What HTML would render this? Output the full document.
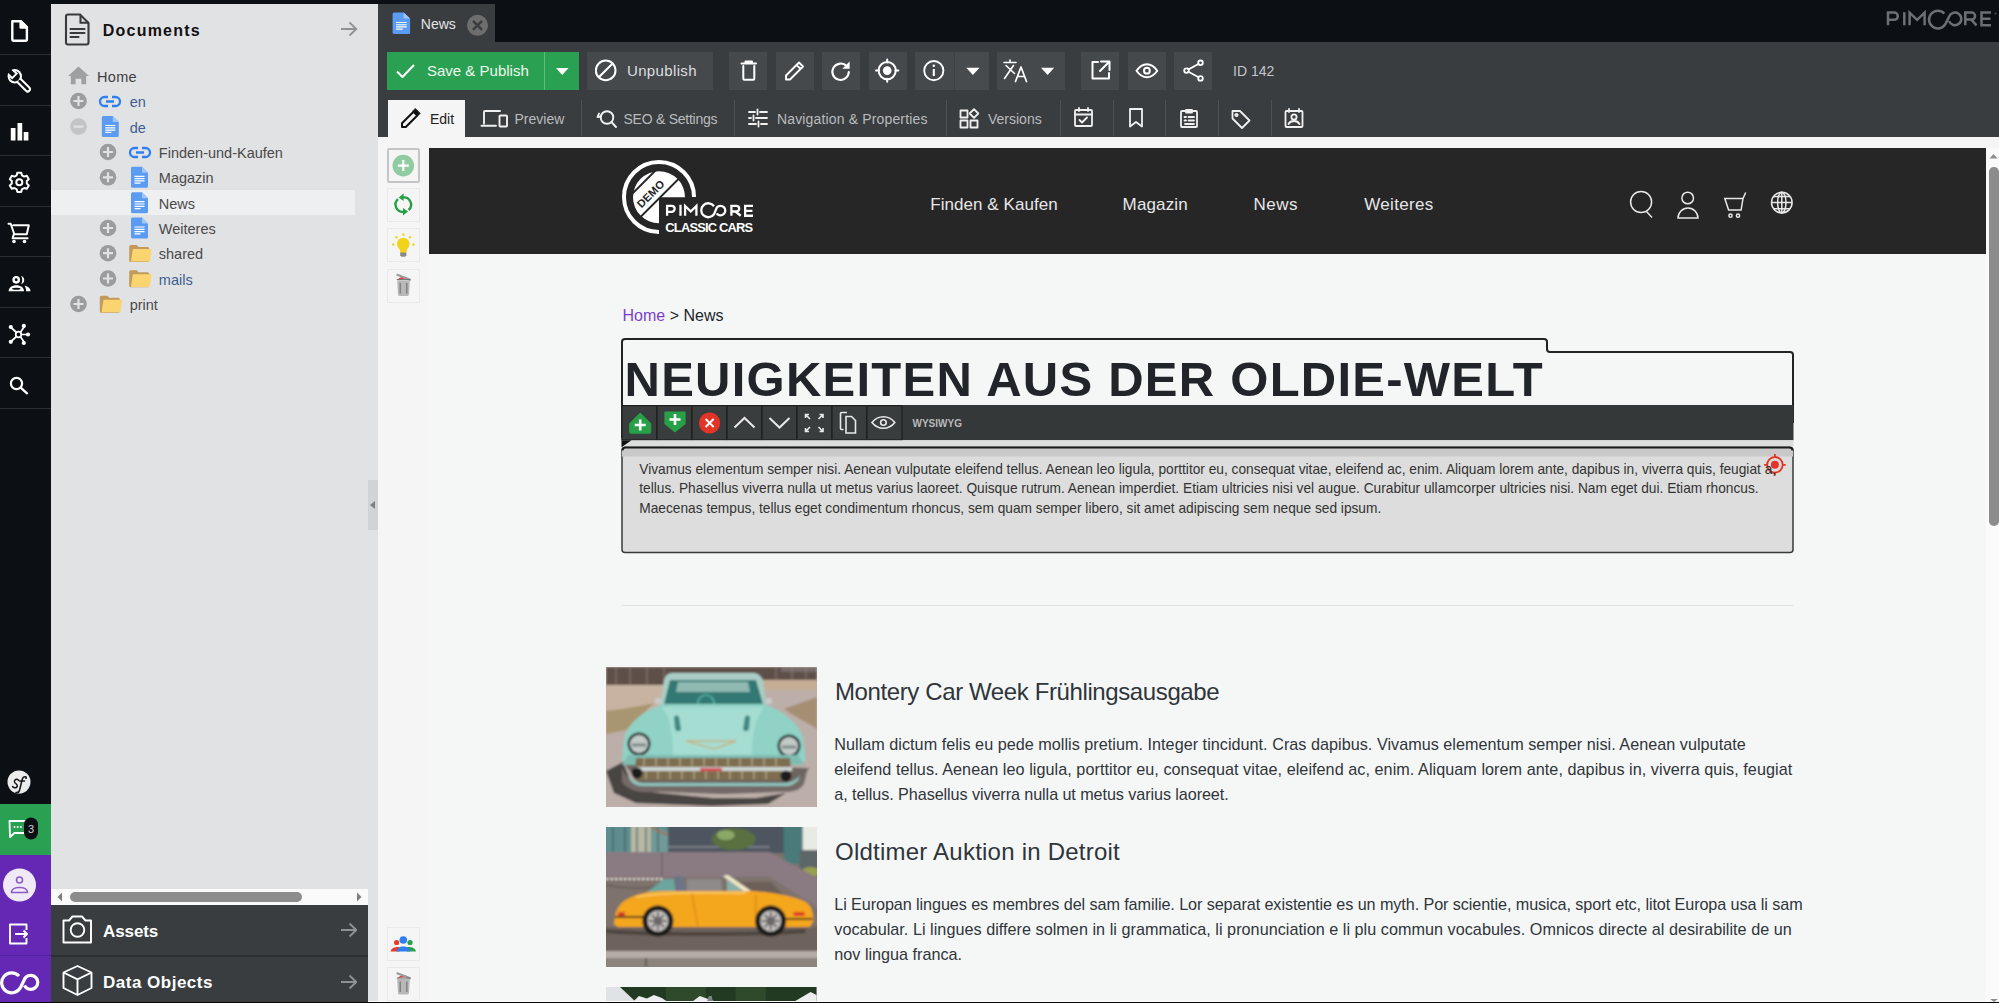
<!DOCTYPE html>
<html><head><meta charset="utf-8">
<style>
*{box-sizing:border-box;margin:0;padding:0}
html,body{width:1999px;height:1003px;overflow:hidden;background:#0c1014;font-family:"Liberation Sans",sans-serif}
.a{position:absolute}
#sb{left:0;top:0;width:51px;height:1003px;background:#0c1014}
.sep{position:absolute;left:0;width:51px;height:1px;background:#2b2f33}
#tree{left:51px;top:4px;width:327px;height:999px;background:#e1e2e4}
#main{left:378px;top:4px;width:1621px;height:999px;background:#f5f5f5}
#tabbar{left:378px;top:0;width:1621px;height:42px;background:#0c1014}
#tb{left:378px;top:42px;width:1621px;height:95px;background:#393d40}
.btn{position:absolute;top:52px;height:38px;background:#45494c}
.tt{position:absolute;top:100px;height:37px;color:#b8babb;font-size:14px}
.tdiv{position:absolute;top:100px;width:1px;height:36px;background:#4d5154}
.tl{font-size:14.5px;line-height:16px;white-space:nowrap}
.nav{top:194.5px;font-size:17px;color:#e6e6e6;white-space:nowrap;line-height:20px}
.tit{left:835px;font-size:24px;color:#2f353a;white-space:nowrap;line-height:28px}
.par{left:834.3px;font-size:16.2px;line-height:25px;color:#30353a;white-space:nowrap}
#ifr{left:428px;top:147px;width:1571px;height:856px;background:#f5f7f7}
</style></head><body>
<!-- sidebar -->
<div id="sb" class="a">
  <div class="sep" style="top:54px"></div>
  <div class="sep" style="top:105px"></div>
  <div class="sep" style="top:155px"></div>
  <div class="sep" style="top:206px"></div>
  <div class="sep" style="top:256px"></div>
  <div class="sep" style="top:307px"></div>
  <div class="sep" style="top:357px"></div>
  <div class="sep" style="top:408px"></div>
  <div class="a" style="left:0;top:804px;width:51px;height:51px;background:#2aa152"></div>
  <div class="a" style="left:0;top:855px;width:51px;height:148px;background:#6428b4"></div>
  <div class="sep" style="top:955px;background:#5220a0"></div>

  <svg class="a" style="left:0;top:0" width="51" height="420" viewBox="0 0 51 420" fill="none" stroke="#fff" stroke-width="2.4" stroke-linejoin="round" stroke-linecap="round">
    <!-- doc -->
    <path d="M12.3 21.2h8.6l6 6v12.6a0.9 0.9 0 0 1-0.9 0.9H13.2a0.9 0.9 0 0 1-0.9-0.9z"/>
    <path d="M20.6 21.2v6.3h6.3z" fill="#fff"/>
    <!-- wrench -->
    <g transform="translate(14.8 76.3) rotate(45)" stroke="none">
      <circle r="7.2" fill="#fff"/>
      <rect x="0" y="-3.3" width="21.5" height="6.6" rx="3.3" fill="#fff"/>
      <circle r="5.1" fill="#0c1014"/>
      <rect x="5.5" y="-1.3" width="14" height="2.6" rx="1.3" fill="#0c1014"/>
      <rect x="-5.2" y="-4.2" width="5.6" height="8.4" fill="#fff"/>
      <rect x="-10" y="-2.2" width="8.5" height="4.4" fill="#0c1014"/>
    </g>
    <!-- bars -->
    <path d="M10.8 128h4.7v12.6h-4.7zM17.5 123h4.7v17.6h-4.7zM23.7 132h4.7v8.6h-4.7z" fill="#fff" stroke="none"/>
    <!-- gear -->
    <g transform="translate(19.3 182.2)">
      <path d="M-2 -9.5h4l0.6 2.6 2.3 1.3 2.6-0.8 2 3.4-2 1.8v2.6l2 1.8-2 3.4-2.6-0.8-2.3 1.3-0.6 2.6h-4l-0.6-2.6-2.3-1.3-2.6 0.8-2-3.4 2-1.8v-2.6l-2-1.8 2-3.4 2.6 0.8 2.3-1.3z" stroke-width="2"/>
      <circle r="3" stroke-width="2"/>
    </g>
    <!-- cart -->
    <path d="M8.5 223.8h2.2l3.6 10.5h12.5l2-9h-15.5M13.8 234.3l-1.2 4h15" stroke-width="2"/>
    <circle cx="14" cy="241.5" r="1.8" fill="#fff" stroke="none"/>
    <circle cx="24.5" cy="241.5" r="1.8" fill="#fff" stroke="none"/>
    <!-- users -->
    <circle cx="16.2" cy="279.8" r="2.65" stroke-width="2.4"/>
    <path d="M21.2 275.9a4.3 4.3 0 0 1 0 8.2a9 9 0 0 0 0-8.2z" fill="#fff" stroke="none"/>
    <path d="M8.6 291.2c0-3.7 3.5-6 7.7-6s7.7 2.3 7.7 6z" fill="#fff" stroke="none"/>
    <ellipse cx="16.3" cy="288.7" rx="4.2" ry="0.95" fill="#0c1014" stroke="none"/>
    <path d="M24.6 285.8c3.5 0.5 5.9 2.6 5.9 5.4h-4.4c0-2.1-0.5-3.8-1.5-5.4z" fill="#fff" stroke="none"/>
    <!-- network -->
    <g stroke-width="1.7">
      <circle cx="18.5" cy="334.5" r="2.8"/>
      <path d="M16.5 332.5L11 327.5M20.5 332.3L24 327M21.3 334.5H28M20.5 336.7L24 342M16.5 336.5L11 341.5"/>
    </g>
    <g fill="#fff" stroke="none">
      <circle cx="10.8" cy="327" r="2.1"/><circle cx="23.8" cy="325.9" r="2.1"/><circle cx="28" cy="334.5" r="2.1"/><circle cx="23.8" cy="343" r="2.1"/><circle cx="10.8" cy="341.8" r="2.1"/>
    </g>
    <!-- search -->
    <circle cx="16.5" cy="383.5" r="5.6" stroke-width="2.2"/>
    <path d="M20.7 387.7l6.3 5.6" stroke-width="2.4"/>
  </svg>
  <!-- symfony -->
  <svg class="a" style="left:0;top:760px" width="51" height="243" viewBox="0 760 51 243">
    <circle cx="19" cy="782" r="11.5" fill="#ececec"/>
    <path d="M12.5 786.5c1 1.5 3 1.8 4.2 0.6 1.3-1.3 0.3-2.6-1-3.6-1.3-1-1.8-2.3-0.7-3.5 1.2-1.2 3-0.8 3.6 0.3" fill="none" stroke="#141414" stroke-width="1.5" stroke-linecap="round"/>
    <path d="M16 792.5c1.8 0.5 3-0.5 3.6-2.5l2.6-10.5c0.6-2.2 2-3.2 3.8-2.6M19.5 781h5" fill="none" stroke="#141414" stroke-width="1.5" stroke-linecap="round"/>
    <circle cx="26" cy="778" r="1" fill="#141414"/>
    <!-- chat -->
    <path d="M9.5 821h16v12h-11l-4.5 4z" fill="none" stroke="#fff" stroke-width="1.8" stroke-linejoin="round"/>
    <circle cx="14.5" cy="827" r="1" fill="#fff"/><circle cx="17.7" cy="827" r="1" fill="#fff"/><circle cx="20.9" cy="827" r="1" fill="#fff"/>
    <rect x="24" y="817.5" width="14" height="22" rx="7" fill="#0c1014"/>
    <text x="31" y="833" font-size="11" fill="#d0d0d0" text-anchor="middle" font-family="Liberation Sans">3</text>
    <!-- avatar -->
    <circle cx="19.5" cy="885" r="16.5" fill="#f0eaf8"/>
    <circle cx="19.5" cy="880" r="3" fill="none" stroke="#8a5cc8" stroke-width="1.6"/>
    <path d="M11.5 892.5c0-3.3 3.8-5 8-5s8 1.7 8 5z" fill="none" stroke="#8a5cc8" stroke-width="1.7" stroke-linejoin="round"/>
    <!-- logout -->
    <path d="M26.5 930v-5.5h-16.5v19h16.5v-5.5M15 934h12M23.5 930.5l3.5 3.5-3.5 3.5" fill="none" stroke="#fff" stroke-width="1.9" stroke-linejoin="round"/>
    <!-- infinity -->
    <path d="M19 976a10 10 0 1 0 1.5 11.5l3.5-7a7 7 0 1 1 0.5 5" fill="none" stroke="#fff" stroke-width="3.2"/>
  </svg>
</div>
<!-- tree -->
<div id="tree" class="a">
  <svg class="a" style="left:0;top:0" width="327" height="330" viewBox="51 4 327 330">
    <defs>
      <g id="plus"><circle r="8.3" fill="#9b9c9e"/><path d="M-5 0h10M0-5v10" stroke="#e1e2e4" stroke-width="2.2"/></g>
      <g id="doc"><path d="M0 1.5a1.5 1.5 0 0 1 1.5-1.5h9.5l6 6v13.5a1.5 1.5 0 0 1-1.5 1.5h-14a1.5 1.5 0 0 1-1.5-1.5z" fill="#5b9cf2"/><path d="M11 0l6 6h-6z" fill="#a0c6f8"/><path d="M3.5 9.5h10M3.5 11.8h10M3.5 14.1h10M3.5 16.4h6" stroke="#fff" stroke-width="1.2"/></g>
      <g id="fold"><path d="M0 2a1.5 1.5 0 0 1 1.5-1.5h6l2 2h9a1.5 1.5 0 0 1 1.5 1.5v12a1.5 1.5 0 0 1-1.5 1.5h-17a1.5 1.5 0 0 1-1.5-1.5z" fill="#c39a5d"/><path d="M3.7 4.5h17.5a1 1 0 0 1 1 1.1l-1.5 10.4a1.5 1.5 0 0 1-1.5 1.1h-17.5z" fill="#f9d46f"/></g>
      <g id="link"><path d="M8.5 0.5h-3.5a4.5 4.5 0 0 0 0 9h3.5M12.5 0.5h3.5a4.5 4.5 0 0 1 0 9h-3.5M6.5 5h8" fill="none" stroke="#2f7ff0" stroke-width="2.3"/></g>
    </defs>
    <!-- header doc icon -->
    <path d="M66 16.5a2 2 0 0 1 2-2h12l8.5 8.5v19.5a2 2 0 0 1-2 2h-18.5a2 2 0 0 1-2-2z" fill="none" stroke="#3a3a3a" stroke-width="2.1"/>
    <path d="M80.5 14.8v8h8" fill="none" stroke="#3a3a3a" stroke-width="2.1"/>
    <path d="M70.5 29h14M70.5 33h14M70.5 37h8" stroke="#3a3a3a" stroke-width="2.1" stroke-linecap="round"/>
    <path d="M341 29h15M349.5 22.5l6.8 6.5-6.8 6.5" fill="none" stroke="#8f9193" stroke-width="1.8"/>
    <!-- selected row -->
    <rect x="51" y="190" width="304" height="25" fill="#eeeff0"/>
    <!-- home -->
    <path d="M78.5 66.5l10.5 9.5h-2.8v8.3h-4.8v-5.5h-5.8v5.5h-4.8v-8.3h-2.8z" fill="#9fa0a2"/>
    <use href="#plus" x="78.5" y="101"/>
    <use href="#link" x="99.5" y="96.5"/>
    <circle cx="78.5" cy="126.6" r="8.3" fill="#c3c4c6"/><path d="M73.5 126.6h10" stroke="#e1e2e4" stroke-width="2.2"/>
    <use href="#doc" x="101.8" y="116"/>
    <use href="#plus" x="108" y="152"/>
    <use href="#link" x="129.5" y="147.5"/>
    <use href="#plus" x="108" y="177.3"/>
    <use href="#doc" x="131" y="166.8"/>
    <use href="#doc" x="131" y="192.2"/>
    <use href="#plus" x="108" y="228"/>
    <use href="#doc" x="131" y="217.5"/>
    <use href="#plus" x="108" y="253.2"/>
    <use href="#fold" x="129.2" y="244.5"/>
    <use href="#plus" x="108" y="278.5"/>
    <use href="#fold" x="129.2" y="269.8"/>
    <use href="#plus" x="78.5" y="304"/>
    <use href="#fold" x="99.8" y="295.2"/>
  </svg>
  <div class="a" style="left:51.7px;top:17.7px;font-size:16px;font-weight:bold;letter-spacing:1.24px;color:#111">Documents</div>
  <div class="a tl" style="left:46px;top:65px;color:#404040;letter-spacing:0.3px">Home</div>
  <div class="a tl" style="left:78.7px;top:90px;color:#3e5f90">en</div>
  <div class="a tl" style="left:78.7px;top:115.5px;color:#3e5f90">de</div>
  <div class="a tl" style="left:107.8px;top:141px;color:#4a4a4a">Finden-und-Kaufen</div>
  <div class="a tl" style="left:107.8px;top:166.3px;color:#4a4a4a">Magazin</div>
  <div class="a tl" style="left:107.8px;top:191.6px;color:#4a4a4a">News</div>
  <div class="a tl" style="left:107.8px;top:217px;color:#4a4a4a">Weiteres</div>
  <div class="a tl" style="left:107.8px;top:242.2px;color:#4a4a4a">shared</div>
  <div class="a tl" style="left:107.8px;top:267.5px;color:#3e5f90">mails</div>
  <div class="a tl" style="left:78.7px;top:293px;color:#4a4a4a">print</div>
  <!-- collapse handle -->
  <div class="a" style="left:317px;top:476px;width:10px;height:50px;background:#d2d3d5"></div>
  <svg class="a" style="left:318px;top:496px" width="8" height="10"><path d="M6 1v8L1 5z" fill="#7d7f81"/></svg>
  <!-- h scrollbar -->
  <div class="a" style="left:0;top:885px;width:317px;height:16px;background:#fafafa"></div>
  <svg class="a" style="left:0;top:885px" width="317" height="16"><path d="M11 3.5v9l-4.5-4.5z" fill="#7f7f7f"/><path d="M306 3.5v9l4.5-4.5z" fill="#7f7f7f"/></svg>
  <div class="a" style="left:19px;top:888px;width:232px;height:10px;border-radius:5px;background:#8c8c8c"></div>
  <!-- assets / data objects -->
  <div class="a" style="left:0;top:901px;width:317px;height:98px;background:#393d40"></div>
  <div class="a" style="left:0;top:951px;width:317px;height:1.5px;background:#2c3033"></div>
  <svg class="a" style="left:0;top:901px" width="317" height="98" viewBox="51 905 317 98" fill="none" stroke="#fff" stroke-width="1.9" stroke-linejoin="round">
    <path d="M63.5 920.5h5.5l3.5-4h9.5l3.5 4h5.5v22h-27.5z"/>
    <circle cx="77.5" cy="930" r="6.8"/>
    <path d="M63.5 972.5l14-6.5 14 6.5v15.5l-14 7-14-7zM63.5 972.5l14 6.8 14-6.8M77.5 979.3v15.5"/>
    <path d="M341 930h15M349.5 923.5l6.8 6.5-6.8 6.5M341 982h15M349.5 975.5l6.8 6.5-6.8 6.5" stroke="#8f9193" stroke-width="1.8"/>
  </svg>
  <div class="a" style="left:52px;top:917.5px;font-size:17px;font-weight:bold;color:#fff;letter-spacing:-0.1px">Assets</div>
  <div class="a" style="left:52px;top:969px;font-size:17px;font-weight:bold;color:#fff;letter-spacing:0.5px">Data Objects</div>
</div>
<!-- main -->
<div id="tabbar" class="a"></div>
<div class="a" style="left:378px;top:4px;width:117px;height:38px;background:#393d40"></div>
<svg class="a" style="left:378px;top:0" width="1621" height="42" viewBox="378 0 1621 42">
  <g transform="translate(392.6 12.5)"><path d="M0 1.5a1.5 1.5 0 0 1 1.5-1.5h9.5l6.5 6v14a1.5 1.5 0 0 1-1.5 1.5h-14.5a1.5 1.5 0 0 1-1.5-1.5z" fill="#5b9cf2"/><path d="M11 0l6.5 6h-6.5z" fill="#a0c6f8"/><path d="M3.5 10h10.5M3.5 12.2h10.5M3.5 14.4h10.5M3.5 16.6h6.5" stroke="#fff" stroke-width="1.1"/></g>
  <circle cx="477.5" cy="25.3" r="10.5" fill="#6e6e6e"/>
  <path d="M473 20.8l9 9M482 20.8l-9 9" stroke="#393d40" stroke-width="2.6"/>
  <!-- PIMCORE logo -->
  <g fill="none" stroke="#6d7073" stroke-width="2.5">
    <path d="M1888 25.3V12.6h6.2a3.6 3.6 0 0 1 0 7.2h-6.2"/>
    <path d="M1904.3 12.2v13.1"/>
    <path d="M1909.6 25.3V12.6l7.5 7.2 7.5-7.2v12.7"/>
    <path d="M1944.3 13.6a8.8 8.8 0 1 0 1.2 10.3l3.5-7a6.3 6.3 0 1 1 0.1 4.2"/>
    <path d="M1965.3 25.3V12.6h6.3a3.5 3.5 0 0 1 0 7h-6.3M1971.5 19.8l5 5.5"/>
    <path d="M1991 12.6h-9.5v12.7h9.5M1981.5 18.8h9"/>
  </g>
  <circle cx="1995.5" cy="13.5" r="1" fill="#4a4d50"/>
</svg>
<div class="a" style="left:420.8px;top:16px;font-size:14px;color:#e4e4e4">News</div>
<div id="tb" class="a"></div>
<div class="a" style="left:386.5px;top:52px;width:192.5px;height:38px;background:#2aa152"></div>
<div class="a" style="left:544px;top:52px;width:1px;height:38px;background:#5cbd7d"></div>
<div class="btn" style="left:587px;width:125.5px"></div>
<div class="btn" style="left:729px;width:38px"></div>
<div class="btn" style="left:775.5px;width:38px"></div>
<div class="btn" style="left:822px;width:38px"></div>
<div class="btn" style="left:869px;width:38px"></div>
<div class="btn" style="left:915px;width:39px"></div>
<div class="btn" style="left:954px;width:35px;background:#474b4e"></div>
<div class="a" style="left:953.5px;top:52px;width:1px;height:38px;background:#3d4144"></div>
<div class="btn" style="left:997px;width:68px"></div>
<div class="btn" style="left:1081px;width:38px"></div>
<div class="btn" style="left:1127.5px;width:38px"></div>
<div class="btn" style="left:1174px;width:38px"></div>
<div class="a" style="left:427px;top:62px;font-size:15px;color:#eef7ef">Save &amp; Publish</div>
<div class="a" style="left:627px;top:62px;font-size:15px;color:#dcdedf;letter-spacing:0.35px">Unpublish</div>
<div class="a" style="left:1233px;top:63px;font-size:14px;color:#c4c6c8">ID 142</div>
<!-- tab strip -->
<div class="a" style="left:387.5px;top:100px;width:77.3px;height:37px;background:#f5f5f5"></div>
<div class="tdiv" style="left:581px"></div>
<div class="tdiv" style="left:734px"></div>
<div class="tdiv" style="left:946px"></div>
<div class="tdiv" style="left:1059.5px"></div>
<div class="tdiv" style="left:1112.5px"></div>
<div class="tdiv" style="left:1165px"></div>
<div class="tdiv" style="left:1217.5px"></div>
<div class="tdiv" style="left:1270.5px"></div>
<div class="a" style="left:430px;top:111px;font-size:14px;color:#222">Edit</div>
<div class="a" style="left:514.5px;top:111px;font-size:14px;color:#b9bbbd">Preview</div>
<div class="a" style="left:623.5px;top:111px;font-size:14px;color:#b9bbbd;letter-spacing:-0.25px">SEO &amp; Settings</div>
<div class="a" style="left:777px;top:111px;font-size:14px;color:#b9bbbd;letter-spacing:0.15px">Navigation &amp; Properties</div>
<div class="a" style="left:988px;top:111px;font-size:14px;color:#b9bbbd">Versions</div>
<svg class="a" style="left:378px;top:42px" width="1000" height="95" viewBox="378 42 1000 95" fill="none" stroke="#fff" stroke-width="2" stroke-linejoin="round" stroke-linecap="round">
  <path d="M397 71.5l5.5 5.5 11.5-12" stroke-width="2.1" stroke-linecap="butt"/>
  <path d="M556 68h12.5l-6.25 7z" fill="#fff" stroke="none"/>
  <circle cx="605.7" cy="70.4" r="9.8" stroke-width="2"/>
  <path d="M598.8 77.3l13.8-13.8"/>
  <!-- trash -->
  <path d="M741.5 63.5h14.5M745.5 63.2v-1.6h6.5v1.6M743.3 66v12.7a1 1 0 0 0 1 1h9a1 1 0 0 0 1-1V66" stroke-width="2"/>
  <!-- pencil -->
  <path d="M786 79.5v-4l13-13 4 4-13 13zM796.5 64.8l4 4" stroke-width="1.9"/>
  <!-- refresh -->
  <path d="M846.8 66.4a8.2 8.2 0 1 0 2 5.6" stroke-width="2.1"/>
  <path d="M849.6 61.5v7.3h-7.3z" fill="#fff" stroke="none"/>
  <!-- target -->
  <circle cx="887.2" cy="70.6" r="8.6" stroke-width="2"/>
  <circle cx="887.2" cy="70.6" r="4.3" fill="#fff" stroke="none"/>
  <path d="M887.2 59.5v3M887.2 78.7v3M876 70.6h3M895.3 70.6h3" stroke-width="2"/>
  <!-- info -->
  <circle cx="933.8" cy="70.6" r="9.6" stroke-width="1.9"/>
  <path d="M933.8 69v7" stroke-width="2.1" stroke-linecap="butt"/>
  <circle cx="933.8" cy="65.8" r="1.3" fill="#fff" stroke="none"/>
  <path d="M966.3 67.8h13.2l-6.6 7.2z" fill="#fff" stroke="none"/>
  <!-- translate -->
  <path d="M1004 62.5h12M1010 60v2.5M1006 65.5l8.5 8M1013.5 65.5l-9 13" stroke-width="1.6"/>
  <path d="M1015.5 81.5l5.5-14.5 5.5 14.5M1017.5 76.5h7" stroke-width="1.7"/>
  <path d="M1041 67.8h13.2l-6.6 7.2z" fill="#fff" stroke="none"/>
  <!-- open external -->
  <path d="M1098 62h-5.5v16.5h16.5v-5.5M1101 61.5h8.5v8.5M1109 62l-9 9" stroke-width="2"/>
  <!-- eye -->
  <path d="M1136.5 70.7c3-4.3 6.5-6.5 10.4-6.5s7.4 2.2 10.4 6.5c-3 4.3-6.5 6.5-10.4 6.5s-7.4-2.2-10.4-6.5z" stroke-width="2"/>
  <circle cx="1146.9" cy="70.7" r="2.9" stroke-width="2"/>
  <!-- share -->
  <circle cx="1200.5" cy="62.8" r="2.3" stroke-width="1.8"/>
  <circle cx="1186.5" cy="70.6" r="2.3" stroke-width="1.8"/>
  <circle cx="1200.5" cy="78.4" r="2.3" stroke-width="1.8"/>
  <path d="M1188.5 69.4l10-5.4M1188.5 71.8l10 5.4" stroke-width="1.8"/>
  <!-- tab icons -->
  <path d="M402 127v-3.8l11.5-11.5 3.8 3.8L405.8 127z" stroke="#111" stroke-width="2"/><path d="M415.5 108.8l4.6 4.6-2.4 2.4-4.6-4.6z" fill="#111" stroke="#111" stroke-width="1"/>
  <path d="M484 123.5v-11.5a1 1 0 0 1 1-1h15M481.5 125.8h14.5" stroke="#f0f0f0" stroke-width="1.9"/>
  <rect x="499.5" y="115.5" width="7.5" height="11" rx="0.8" stroke="#f0f0f0" stroke-width="1.9"/>
  <circle cx="607" cy="117.5" r="6.3" stroke="#f0f0f0" stroke-width="1.9"/>
  <path d="M611.5 122l4.5 5M599 113.5l-1.5 3.5 3.5-0.5" stroke="#f0f0f0" stroke-width="1.9"/>
  <g stroke="#f0f0f0" stroke-width="1.8">
    <path d="M749 112h6M760 112h7M749 118h2M756 118h11M749 124h7M761 124h6M757.5 109.5v5M753.5 115.5v5M758.5 121.5v5"/>
    <rect x="960.5" y="110.5" width="7" height="7"/><rect x="960.5" y="120.5" width="7" height="7"/><rect x="970.5" y="120.5" width="7" height="7"/>
    <path d="M974 109.2l4.3 4.3-4.3 4.3-4.3-4.3z"/>
    <rect x="1075" y="110" width="17" height="16" rx="1"/><path d="M1075 114.5h17M1079 108v3M1088 108v3M1079.5 120l2.5 2.5 5-5"/>
    <path d="M1130 109v17.5l6-4.5 6 4.5V109z"/>
    <rect x="1181" y="111" width="16" height="16" rx="1"/><path d="M1186 110h6v2.5h-6zM1184.5 117h1.5M1188.5 117h5.5M1184.5 120.5h1.5M1188.5 120.5h5.5M1185 124h9"/>
    <path d="M1232.5 111v7.5l9.5 9.5 7.5-7.5-9.5-9.5z"/><circle cx="1236.5" cy="115" r="1.2"/>
    <rect x="1285.5" y="111" width="17" height="16" rx="1"/><path d="M1289 109v3M1299 109v3"/><circle cx="1294" cy="117" r="2.6"/><path d="M1288.5 124c1-2 3-3 5.5-3s4.5 1 5.5 3"/>
  </g>
</svg>
<div id="main" class="a" style="top:137px;height:866px"></div>
<div id="ifr" class="a"></div>
<!-- left edit buttons -->
<div class="a" style="left:386.7px;top:148px;width:33.5px;height:35px;border:2px solid #c4c5c6;border-radius:2px"></div>
<div class="a" style="left:386.7px;top:188px;width:33.5px;height:34px;border:1px solid #e9e9e9"></div>
<div class="a" style="left:386.7px;top:228px;width:33.5px;height:34px;border:1px solid #e9e9e9"></div>
<div class="a" style="left:386.7px;top:268.5px;width:33.5px;height:34px;border:1px solid #e9e9e9"></div>
<div class="a" style="left:386.7px;top:927px;width:33.5px;height:34px;border:1px solid #e9e9e9"></div>
<div class="a" style="left:386.7px;top:967px;width:33.5px;height:34px;border:1px solid #e9e9e9"></div>
<svg class="a" style="left:378px;top:137px" width="50" height="866" viewBox="378 137 50 866">
  <circle cx="403.3" cy="165.6" r="10.8" fill="#90cba1"/>
  <path d="M397.8 165.6h11M403.3 160.1v11" stroke="#fff" stroke-width="2.2"/>
  <g transform="translate(806.6 0) scale(-1 1)"><g fill="none" stroke="#26a046" stroke-width="2.4">
    <path d="M398 210a7.2 7.2 0 0 1 6-12.5"/><path d="M408.6 199.2a7.2 7.2 0 0 1-6 12.5"/>
  </g>
  <path d="M403 193.5l5 4-5 3.5z" fill="#26a046"/><path d="M403.6 215.5l-5-4 5-3.5z" fill="#26a046"/></g>
  <circle cx="403.3" cy="244" r="6.3" fill="#f2d31b"/>
  <path d="M399.5 249h7.6l-1 4h-5.6z" fill="#f2d31b"/>
  <path d="M400.2 252.5h6.2v2.8l-1.2 1.5h-3.8l-1.2-1.5z" fill="#8a8a8a"/>
  <g fill="#f2d31b"><circle cx="403.3" cy="234.5" r="1.2"/><circle cx="396.5" cy="237.2" r="1.2"/><circle cx="410.1" cy="237.2" r="1.2"/><circle cx="393.2" cy="244.5" r="1.2"/><circle cx="413.4" cy="244.5" r="1.2"/></g>
  <g id="trash">
    <path d="M397.2 280.5h12.6l-0.8 14a1.6 1.6 0 0 1-1.6 1.5h-7.8a1.6 1.6 0 0 1-1.6-1.5z" fill="#b8b8b8"/>
    <path d="M400.2 283v10.5M406.8 283v10.5" stroke="#7a7a7a" stroke-width="1.3"/>
    <path d="M397.8 279.5c1.5-2 3.5-2.8 5.5-2.8s3.5 0.6 4.8 1.5" fill="#e63b2e"/>
    <path d="M396.6 274.5l14.2 5.5" stroke="#9a9a9a" stroke-width="2.2"/>
    <path d="M396.8 279.6h13.2" stroke="#6e6e6e" stroke-width="1"/>
  </g>
  <circle cx="403.3" cy="940" r="3.8" fill="#2f7ef0"/>
  <circle cx="396.6" cy="942.5" r="2.6" fill="#e53c2d"/>
  <circle cx="410" cy="942.5" r="2.6" fill="#28a149"/>
  <path d="M390.5 951.5c0.5-2.3 2.5-4.2 6-4.5h3v4.5z" fill="#e53c2d"/>
  <path d="M416 951.5c-0.5-2.3-2.5-4.2-6-4.5h-3v4.5z" fill="#28a149"/>
  <path d="M396.5 951.5c0.3-3 3-5 6.8-5s6.5 2 6.8 5z" fill="#2f7ef0"/>
  <use href="#trash" x="0" y="698.5"/>
</svg>
<!-- iframe content -->
<div class="a" style="left:428.6px;top:147.5px;width:1557.4px;height:106.5px;background:#262626"></div>
<div class="a" style="left:1986px;top:147.5px;width:13px;height:855px;background:#fafafa"></div>
<svg class="a" style="left:1986px;top:147px" width="13" height="20"><path d="M3.5 11.5h8l-4-4.5z" fill="#8c8c8c"/></svg>
<div class="a" style="left:1989.4px;top:167px;width:9.6px;height:358.5px;border-radius:4.8px;background:#8c8c8c"></div>
<svg class="a" style="left:600px;top:150px" width="200" height="100" viewBox="600 150 200 100">
  <path d="M659 232a35 35 0 1 1 35-35" fill="none" stroke="#fff" stroke-width="4"/>
  <path d="M659 223.2a26 26 0 1 1 26-26h-26z" fill="#fff"/>
  <path d="M629 197l30-30M640 217.5l40-40" stroke="#262626" stroke-width="1.8"/>
  <text x="0" y="0" transform="translate(641.5 208.5) rotate(-45)" font-family="Liberation Sans" font-size="11" font-weight="bold" fill="#262626" letter-spacing="0.2">DEMO</text>
  <g fill="none" stroke="#fff" stroke-width="2.3">
    <path d="M667.1 215.75V205.9h4.6a2.95 2.95 0 0 1 0 5.9h-4.6"/>
    <path d="M680.5 204.75v11"/>
    <path d="M685.1 215.75V205.9l5.65 5.6 5.65-5.6v9.85"/>
    <path d="M713.98 206.24A7 7 0 1 0 713.98 214.26L716.82 207.5A4.8 4.8 0 1 1 716.6 213.4"/>
    <path d="M731.4 215.75V205.9h5a2.8 2.8 0 0 1 0 5.6h-5M735.5 211.5l5.2 4.25"/>
    <path d="M753 205.9h-7.85v9.85h7.85M745.15 210.8h7.3"/>
  </g>
  <text x="665.3" y="232.3" font-family="Liberation Sans" font-size="12.9" font-weight="bold" fill="#fff" letter-spacing="-0.8">CLASSIC CARS</text>
</svg>
<div class="a nav" style="left:930.3px;letter-spacing:0.05px">Finden &amp; Kaufen</div>
<div class="a nav" style="left:1122.6px;letter-spacing:0.15px">Magazin</div>
<div class="a nav" style="left:1253.5px;letter-spacing:0.5px">News</div>
<div class="a nav" style="left:1364.3px;letter-spacing:0.3px">Weiteres</div>
<svg class="a" style="left:1610px;top:180px" width="200" height="50" viewBox="1610 180 200 50" fill="none" stroke="#e8e8e8" stroke-width="1.5">
  <circle cx="1641.1" cy="202" r="10.5"/><path d="M1646.5 211.5l5.5 6"/>
  <circle cx="1687.7" cy="198" r="5.8"/><path d="M1678 218h20a10 10 0 0 0-20 0z"/>
  <path d="M1745.7 192.5l-2.7 6h-18.2l3.8 11.5h12.5l1.9-11.5"/><circle cx="1730.5" cy="215.7" r="1.6"/><circle cx="1738" cy="215.7" r="1.6"/>
  <circle cx="1781.8" cy="202.6" r="10.3"/><path d="M1771.5 202.6h20.6M1773.5 196.5h16.6M1773.5 208.7h16.6M1781.8 192.3v20.6"/><ellipse cx="1781.8" cy="202.6" rx="4.2" ry="10.3"/>
</svg>
<!-- breadcrumb -->
<div class="a" style="left:622.5px;top:307px;font-size:16px;color:#212529;white-space:nowrap"><span style="color:#7b3fd0">Home</span> &gt; News</div>
<!-- heading box -->
<svg class="a" style="left:600px;top:330px" width="1210" height="240" viewBox="600 330 1210 240">
  <path d="M622 438V342a3 3 0 0 1 3-3h919a3 3 0 0 1 3 3v7a3 3 0 0 0 3 3h240a3 3 0 0 1 3 3v68" fill="none" stroke="#232323" stroke-width="2"/>
  <rect x="621.5" y="405" width="1172" height="35.3" fill="#353839"/>
  <g fill="#393d3e" stroke="#1f1f1f" stroke-width="1.2">
    <rect x="622" y="405.6" width="35" height="34.4"/><rect x="657" y="405.6" width="35" height="34.4"/><rect x="692" y="405.6" width="35" height="34.4"/><rect x="727" y="405.6" width="35" height="34.4"/><rect x="762" y="405.6" width="35" height="34.4"/><rect x="797" y="405.6" width="35" height="34.4"/><rect x="832" y="405.6" width="35" height="34.4"/><rect x="867" y="405.6" width="35" height="34.4"/>
  </g>
  <rect x="621.5" y="440.3" width="1172" height="6.5" fill="#dcdddd"/>
  <path d="M621.5 440.3h10l-10 7z" fill="#111"/>
  <rect x="622" y="447.5" width="1171" height="105" rx="3" fill="#dcdddc" stroke="#3a3a3a" stroke-width="1.5"/>
  <path d="M622 451a3 3 0 0 1 3-3h1165a3 3 0 0 1 3 3v5.5h-1171z" fill="#c8c9c8"/>
  <path d="M622.5 450.5a3 3 0 0 1 3-3h1164a3 3 0 0 1 3 3" fill="none" stroke="#1a1a1a" stroke-width="2"/>
  <!-- bar icons -->
  <path d="M629.7 423.5l10.5-10.5 10.6 10.5v8.5a1.2 1.2 0 0 1-1.2 1.2h-18.7a1.2 1.2 0 0 1-1.2-1.2z" fill="#27a047" stroke="#27a047" stroke-width="1" stroke-linejoin="round"/>
  <path d="M640.2 419.5v11M634.7 425h11" stroke="#fff" stroke-width="2.6"/>
  <path d="M664.4 412.5a1 1 0 0 1 1-1h19.2a1 1 0 0 1 1 1v11.5l-10.6 8.4-10.6-8.4z" fill="#27a047"/>
  <path d="M675 414v11M669.5 419.5h11" stroke="#fff" stroke-width="2.6"/>
  <circle cx="709.6" cy="423" r="10.6" fill="#e23427"/>
  <path d="M705.6 419l8 8M713.6 419l-8 8" stroke="#fff" stroke-width="1.9"/>
  <g fill="none" stroke="#e8e8e8" stroke-width="2">
    <path d="M734.5 427.5l10-9.5 10 9.5"/>
    <path d="M769.5 418l10 9.5 10-9.5"/>
  </g>
  <g fill="none" stroke="#e8e8e8" stroke-width="1.6">
    <path d="M805.5 414.5l4.5 4.5M805.5 418v-3.5h3.5M823 414.5l-4.5 4.5M823 418v-3.5h-3.5M805.5 431.5l4.5-4.5M805.5 428v3.5h3.5M823 431.5l-4.5-4.5M823 428v3.5h-3.5"/>
    <path d="M843.5 429.5h-2a1 1 0 0 1-1-1v-15a1 1 0 0 1 1-1h5.5"/>
    <path d="M846 416.5h5.5l4 4v12.5h-9.5z"/>
    <path d="M872 422.5c3-3.8 6.5-5.8 11.4-5.8s8.4 2 11.4 5.8c-3 3.8-6.5 5.8-11.4 5.8s-8.4-2-11.4-5.8z"/>
    <circle cx="883.4" cy="422.5" r="2.8"/>
  </g>
  <text x="912.5" y="426.7" font-family="Liberation Sans" font-size="10" font-weight="bold" fill="#b8babb">WYSIWYG</text>
  <!-- red target -->
  <g fill="none" stroke="#e23427" stroke-width="1.8"><circle cx="1774.9" cy="464.8" r="7.8"/><path d="M1774.9 454v3M1774.9 472.6v3M1764.1 464.8h3M1782.7 464.8h3"/></g>
  <circle cx="1774.9" cy="464.8" r="4" fill="#e23427"/>
</svg>
<div class="a" style="left:624.5px;top:351.5px;font-size:49px;font-weight:bold;letter-spacing:1.25px;color:#212529;white-space:nowrap;line-height:55px">NEUIGKEITEN AUS DER OLDIE-WELT</div>
<div class="a" style="left:639.3px;top:459.5px;font-size:13.72px;line-height:19.75px;color:#333;white-space:nowrap">Vivamus elementum semper nisi. Aenean vulputate eleifend tellus. Aenean leo ligula, porttitor eu, consequat vitae, eleifend ac, enim. Aliquam lorem ante, dapibus in, viverra quis, feugiat a,<br>tellus. Phasellus viverra nulla ut metus varius laoreet. Quisque rutrum. Aenean imperdiet. Etiam ultricies nisi vel augue. Curabitur ullamcorper ultricies nisi. Nam eget dui. Etiam rhoncus.<br>Maecenas tempus, tellus eget condimentum rhoncus, sem quam semper libero, sit amet adipiscing sem neque sed ipsum.</div>
<div class="a" style="left:622px;top:605px;width:1171px;height:1px;background:#dfe2e4"></div>
<!-- articles -->
<div class="a tit" style="top:678px;letter-spacing:-0.39px">Montery Car Week Frühlingsausgabe</div>
<div class="a par" style="top:732px"><div style="letter-spacing:0.024px">Nullam dictum felis eu pede mollis pretium. Integer tincidunt. Cras dapibus. Vivamus elementum semper nisi. Aenean vulputate</div><div style="letter-spacing:0.049px">eleifend tellus. Aenean leo ligula, porttitor eu, consequat vitae, eleifend ac, enim. Aliquam lorem ante, dapibus in, viverra quis, feugiat</div><div style="letter-spacing:-0.088px">a, tellus. Phasellus viverra nulla ut metus varius laoreet.</div></div>
<div class="a tit" style="top:838px;letter-spacing:0.23px">Oldtimer Auktion in Detroit</div>
<div class="a par" style="top:891.5px"><div style="letter-spacing:-0.09px">Li Europan lingues es membres del sam familie. Lor separat existentie es un myth. Por scientie, musica, sport etc, litot Europa usa li sam</div><div style="letter-spacing:0.03px">vocabular. Li lingues differe solmen in li grammatica, li pronunciation e li plu commun vocabules. Omnicos directe al desirabilite de un</div><div>nov lingua franca.</div></div>
<!-- car images -->
<svg class="a" style="left:606px;top:667px" width="211" height="140" viewBox="0 0 211 140">
  <defs><filter id="bl" filterUnits="userSpaceOnUse" x="-5" y="-5" width="221" height="150"><feGaussianBlur stdDeviation="0.9"/></filter><clipPath id="cp"><rect width="211" height="140"/></clipPath></defs>
  <g filter="url(#bl)">
  <rect x="-3" y="-3" width="217" height="146" fill="#bcaea8"/>
  <rect width="211" height="19" fill="#5f4f49"/>
  <path d="M10 0v18M24 0v18M41 0v18M58 0v18M170 0v14M186 0v14M200 0v12" stroke="#8a7a72" stroke-width="1.5" opacity="0.7"/>
  <path d="M175 0h36v5h-36z" fill="#8c8a8e" opacity="0.5"/>
  <path d="M0 18h62l-4 20L20 63 0 67z" fill="#c8b3a2"/>
  <path d="M0 44c15-2 30-4 48-8L20 63 0 67z" fill="#a8966f"/>
  <path d="M150 13h61v10h-58z" fill="#c4ae96"/>
  <path d="M178 42l33-12v32l-6-4c-8-4-18-10-27-16z" fill="#a48f73"/>
  <path d="M0 104L8 126L30 136L106 139L162 137L180 126L150 131L106 131L45 125L25 115L17 95z" fill="#4a4442"/>
  <path d="M18 96l14 20 25 9 60 2 55-2 25-14 6-10z" fill="#6d6562"/>
  <!-- roof & windshield -->
  <path d="M66 6h82c4 0 8 4 9 8l3 24H54l4-24c1-5 4-8 8-8z" fill="#aacec6"/>
  <path d="M64 13h86l7 24H58z" fill="#327873"/>
  <path d="M72 15h70l2 10H70z" fill="#8fb9b1"/>
  <circle cx="100" cy="36" r="8" fill="none" stroke="#58b0a5" stroke-width="1.6"/>
  <circle cx="52" cy="34" r="3.2" fill="#c9cccb"/><circle cx="163" cy="34" r="3.2" fill="#c9cccb"/>
  <!-- body -->
  <path d="M18 72c4-16 18-28 40-35h100c20 7 34 19 39 33l3 24H16z" fill="#90d2c5"/>
  <path d="M55 40h104c-10 8-13 30-13 52H67c0-22-2-44-12-52z" fill="#a6ddd2"/>
  <path d="M68 50c1-2 4-2 5 0l2 12c0 3-5 3-6 0zM139 50c1-2 4-2 5 0l-1 12c-1 3-5 3-6 0z" fill="#3f8881"/>
  <circle cx="33" cy="77" r="11.5" fill="#223333"/><circle cx="33" cy="77" r="9" fill="#c3cbc8"/><path d="M26 78h14" stroke="#7d8886" stroke-width="3"/>
  <circle cx="183" cy="79" r="11.5" fill="#223333"/><circle cx="183" cy="79" r="9" fill="#c3cbc8"/><path d="M176 80h14" stroke="#7d8886" stroke-width="3"/>
  <path d="M80 74h50l-22 8z" fill="none" stroke="#c5b283" stroke-width="1.6"/>
  <!-- grille and bumper -->
  <path d="M22 88h170l6 10H16z" fill="#7fbdb3"/>
  <path d="M30 91h154l2 22H28z" fill="#7e6d50"/>
  <path d="M38 91v8M50 91v8M62 91v8M74 91v8M86 91v8M98 91v8M110 91v8M122 91v8M134 91v8M146 91v8M158 91v8M170 91v8M40 104v8M52 104v8M64 104v8M76 104v8M88 104v8M100 104v8M112 104v8M124 104v8M136 104v8M148 104v8M160 104v8" stroke="#c8bf9e" stroke-width="1"/>
  <path d="M30 100h156v4H30z" fill="#cdd6d3"/>
  <path d="M94 101h22v3H94z" fill="#d6485a"/>
  <path d="M16 100c2 8 8 14 18 16l150 1c10-2 16-8 18-16l-4 16c-4 6-10 8-18 8H38c-10 0-18-4-22-10z" fill="#736b67"/><path d="M22 108c4 5 8 7 14 8h144c6-1 10-3 14-8l-2 5c-3 4-7 6-12 6H36c-5 0-9-2-12-6z" fill="#8fc3bb"/>
  <circle cx="31" cy="106" r="5.5" fill="#1e1e1e"/><circle cx="180" cy="109" r="5.5" fill="#1e1e1e"/>
</g>
</svg>
<svg class="a" style="left:606.4px;top:827px" width="210.6" height="140" viewBox="0 0 211 140">
  <defs><filter id="bl2" filterUnits="userSpaceOnUse" x="-5" y="-5" width="221" height="150"><feGaussianBlur stdDeviation="0.9"/></filter></defs>
  <g filter="url(#bl2)">
  <rect x="-3" y="-3" width="217" height="146" fill="#7d726c"/>
  <rect x="-3" y="-3" width="217" height="29" fill="#4d5660"/>
  <path d="M-3-3h65v29h-65z" fill="#5f8d8f"/>
  <path d="M25 -3h20v29H25z" fill="#b8b8a4"/>
  <path d="M45 -3l17 8v21H45z" fill="#6f9a9a"/>
  <path d="M7 0v25M19 0v25M31 0v25M40 0v25M52 0v25" stroke="#3f5f62" stroke-width="1.2"/>
  <path d="M45 0l17 8" stroke="#a27050" stroke-width="2"/>
  <path d="M62 20h102" stroke="#8a8a90" stroke-width="1.5"/>
  <ellipse cx="128" cy="12" rx="22" ry="11" fill="#5a7040"/>
  <ellipse cx="120" cy="8" rx="9" ry="5" fill="#8aa868"/>
  <path d="M178-3h19v40h-19z" fill="#4c7a7a"/>
  <path d="M197-3h17v26h-17z" fill="#e9eae4"/>
  <path d="M194 23h20v22h-20z" fill="#5d6668"/>
  <ellipse cx="205" cy="45" rx="9" ry="5" fill="#98a050"/>
  <path d="M-3 25h167l50 27v30l-50-32H-3z" fill="#8a7a81"/>
  <path d="M56 25v25" stroke="#6a5f66" stroke-width="1.2"/>
  <path d="M0 52h58" stroke="#e6e0dc" stroke-width="2" stroke-dasharray="2.5 2"/>
  <path d="M0 58c20 4 40 4 58 0" stroke="#5a504c" stroke-width="1" fill="none"/>
  <path d="M120 55h45l20 20v10h-65z" fill="#6c5f58"/>
  <!-- car windows -->
  <path d="M40 66l18-14h10l2 14z" fill="#6aa69e"/>
  <path d="M68 49h9l4 17h-11z" fill="#6c7488"/>
  <path d="M81 52h34l2 14H81z" fill="#8e8a8a"/>
  <path d="M117 49l5-1 25 17h-8z" fill="#f0e8c8"/>
  <path d="M121 52l18 13h-18z" fill="#8ab0aa"/>
  <!-- car body -->
  <path d="M9 90c1-10 8-18 22-22 10-3 16-4 30-4h80c18 0 40 4 52 8 10 3 13 8 14 14l1 8-4 6H12l-4-3z" fill="#f4a61c"/>
  <path d="M30 70c20-4 60-5 110-4" stroke="#fbc860" stroke-width="2" fill="none"/>
  <path d="M86 66l6 33M150 68v31" stroke="#c07a10" stroke-width="0.8"/>
  <path d="M9 90h38M180 92h27" stroke="#3a2a20" stroke-width="1.8"/>
  <path d="M12 85h7v4h-7zM188 85h11v4h-11z" fill="#d9412a"/>
  <path d="M-3 100h217v25H-3z" fill="#6d635c"/>
  <path d="M0 104c40 4 150 4 200 0" stroke="#4e4440" stroke-width="4" fill="none"/>
  <path d="M-3 124h217v7H-3z" fill="#b5ada5"/>
  <path d="M-3 131h217v12H-3z" fill="#8b837b"/>
  <path d="M40 131v9" stroke="#3a3430" stroke-width="1"/>
  <circle cx="52" cy="94" r="15.5" fill="#1f1b1c"/><circle cx="52" cy="94" r="10.5" fill="#c4c0c0"/><circle cx="52" cy="94" r="4" fill="#5b5658"/>
  <path d="M52 85v18M43 94h18M46 88l12 12M58 88l-12 12" stroke="#6d6868" stroke-width="2"/>
  <circle cx="165" cy="94" r="15.5" fill="#1f1b1c"/><circle cx="165" cy="94" r="10.5" fill="#c4c0c0"/><circle cx="165" cy="94" r="4" fill="#5b5658"/>
  <path d="M165 85v18M156 94h18M159 88l12 12M171 88l-12 12" stroke="#6d6868" stroke-width="2"/>
  </g>
</svg>
<svg class="a" style="left:606.3px;top:987px" width="210.6" height="14.3" viewBox="0 0 211 14.3">
  <rect width="211" height="15" fill="#233a22"/>
  <path d="M60 0h40v15H60zM130 0h30v15h-30z" fill="#2f4a2a"/>
  <path d="M0 0h14l16 15H0z" fill="#dfe3e6"/>
  <path d="M27 15l6-6 8 2.5 7-3.5 8 3 13 9z" fill="#eceeee"/>
  <path d="M86 15l8-6 7 2.5 10 3.5z" fill="#eceeee"/>
  <path d="M101 15l2-6h3l1 6z" fill="#7f8580"/>
  <path d="M188 15l17-10 6 3v7z" fill="#eceeee"/>
</svg>
<div class="a" style="left:368px;top:1000.5px;width:1631px;height:1.5px;background:#fdfdfd"></div>
<svg class="a" style="left:1986px;top:995px" width="13" height="8"><path d="M4 4h8l-4 3z" fill="#8c8c8c"/></svg>
<div class="a" style="left:0;top:1002px;width:1999px;height:1px;background:#050608"></div>
</body></html>
